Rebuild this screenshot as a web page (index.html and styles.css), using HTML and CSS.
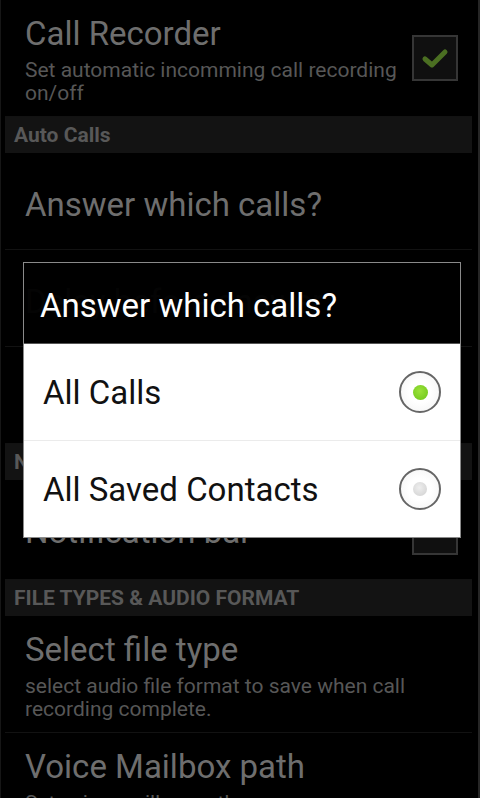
FILE: index.html
```html
<!DOCTYPE html>
<html lang="en">
<head>
    <meta charset="UTF-8">
    <meta name="viewport" content="width=device-width, initial-scale=1.0">
    <title>Call Settings</title>
    <link rel="stylesheet" href="styles.css">
</head>
<body>
    <div class="screen">
        <ul class="prefs">
            <li class="pref tall">
                <div class="pref-text">
                    <div class="pref-title">Call Recorder</div>
                    <div class="pref-summary">Set automatic incomming call recording on/off</div>
                </div>
                <span class="checkbox checked">
                    <svg width="28" height="22" viewBox="0 0 28 22"><path d="M4 12 L11 18 L24 5" fill="none" stroke="#4b6f22" stroke-width="5" stroke-linecap="round" stroke-linejoin="round"/></svg>
                </span>
            </li>
            <li class="category">Auto Calls</li>
            <li class="pref">
                <div class="pref-title">Answer which calls?</div>
            </li>
            <li class="pref">
                <div class="pref-title">Delay before answer</div>
            </li>
            <li class="pref">
                <div class="pref-title">Speaker mode</div>
            </li>
            <li class="category">Notification</li>
            <li class="pref notif">
                <div class="pref-text">
                    <div class="pref-title">Notification bar</div>
                </div>
                <span class="checkbox"></span>
            </li>
            <li class="category">FILE TYPES &amp; AUDIO FORMAT</li>
            <li class="pref tall">
                <div class="pref-text">
                    <div class="pref-title">Select file type</div>
                    <div class="pref-summary">select audio file format to save when call recording complete.</div>
                </div>
            </li>
            <li class="pref tall">
                <div class="pref-text">
                    <div class="pref-title">Voice Mailbox path</div>
                    <div class="pref-summary">Set voice mailbox path</div>
                </div>
            </li>
        </ul>

        <div class="dialog">
            <div class="dialog-title">Answer which calls?</div>
            <ul class="choices">
                <li class="choice">
                    <span>All Calls</span>
                    <span class="radio on"></span>
                </li>
                <li class="choice">
                    <span>All Saved Contacts</span>
                    <span class="radio"></span>
                </li>
            </ul>
        </div>
    </div>
</body>
</html>
```

FILE: styles.css
```css
html, body {
    margin: 0;
    padding: 0;
    background: #000;
}
body {
    font-family: Roboto, "Noto Sans", sans-serif;
    width: 480px;
    height: 798px;
    overflow: hidden;
}
.screen {
    position: relative;
    height: 798px;
    border-left: 1px solid #161616;
    border-right: 2px solid #262626;
    box-sizing: border-box;
}
.prefs {
    list-style: none;
    margin: 0 6px 0 4px;
    padding: 0;
}
.pref {
    display: flex;
    align-items: center;
    box-sizing: border-box;
    height: 97px;
    padding: 7px 14px 0 20px;
    border-bottom: 1px solid #121212;
}
.pref.notif {
    height: 100px;
    padding-top: 4px;
}
.pref.tall {
    height: 117px;
    padding-top: 0;
    align-items: flex-start;
}
.pref-text {
    flex: 1;
}
.pref-title {
    font-size: 33px;
    line-height: 38px;
    color: #6e6e6e;
}
.pref.tall .pref-title {
    margin-top: 15px;
}
.pref-summary {
    font-size: 21px;
    line-height: 23px;
    color: #575757;
    margin-top: 6px;
}
.category {
    height: 36px;
    line-height: 36px;
    background: #131313;
    color: #585858;
    font-size: 21px;
    font-weight: bold;
    padding-left: 9px;
}
.checkbox {
    width: 42px;
    height: 42px;
    margin-left: 10px;
    border: 2px solid #363636;
    background: #101010;
    display: flex;
    align-items: center;
    justify-content: center;
    flex-shrink: 0;
}
.pref.tall .checkbox {
    margin-top: 35px;
}

/* dialog over the dimmed list */
.dialog {
    position: absolute;
    left: 22px;
    top: 262px;
    width: 436px;
    border: 1px solid #8a8a8a;
}
.dialog-title {
    height: 77px;
    padding-top: 3px;
    line-height: 80px;
    background: rgba(0, 0, 0, 0.96);
    color: #fff;
    font-size: 33px;
    padding-left: 16px;
    border-bottom: 1px solid #555;
}
.choices {
    list-style: none;
    margin: 0;
    padding: 0;
    background: #fff;
}
.choice {
    display: flex;
    align-items: center;
    justify-content: space-between;
    height: 96px;
    padding: 0 19px 0 19px;
    color: #111;
    font-size: 33px;
}
.choice + .choice {
    border-top: 1px solid #ebebeb;
}
.radio {
    width: 38px;
    height: 38px;
    border: 2px solid #666;
    border-radius: 50%;
    background: radial-gradient(circle, #fff 40%, #f2f2f2 100%);
    display: flex;
    align-items: center;
    justify-content: center;
}
.radio::after {
    content: "";
    width: 14px;
    height: 14px;
    border-radius: 50%;
    background: radial-gradient(circle at 45% 40%, #eee, #cfcfcf);
}
.radio.on::after {
    width: 15px;
    height: 15px;
    background: radial-gradient(circle at 45% 40%, #9be23a, #6cc419);
}
```
